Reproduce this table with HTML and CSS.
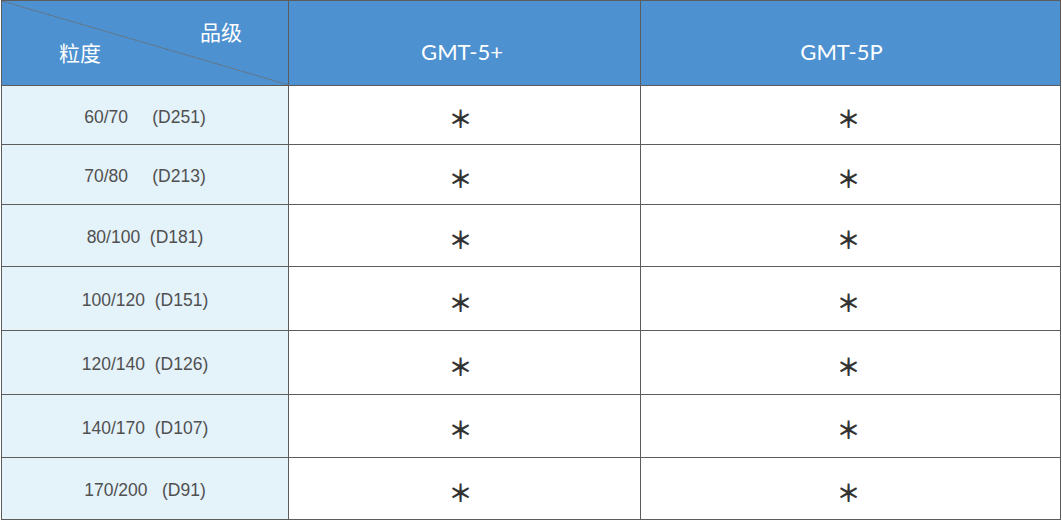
FILE: index.html
```html
<!DOCTYPE html>
<html lang="zh">
<head>
<meta charset="utf-8">
<title>粒度 品级</title>
<link rel="stylesheet" href="styles.css">
</head>
<body>
<div class="grid">
  <div class="cell head corner">
    <svg class="diag" width="287" height="84" viewBox="0 0 287 84" preserveAspectRatio="none">
      <line x1="0" y1="0" x2="287" y2="84" stroke="#6e6a6a" stroke-width="1" stroke-dasharray="2 1"/>
    </svg>
    <span class="lbl-top">品级</span>
    <span class="lbl-bot">粒度</span>
  </div>
  <div class="cell head grade">GMT-5+</div>
  <div class="cell head grade g2">GMT-5P</div>

  <div class="cell size">60/70     (D251)</div>
  <div class="cell mark"><span class="ast">＊</span></div>
  <div class="cell mark m2"><span class="ast">＊</span></div>

  <div class="cell size">70/80     (D213)</div>
  <div class="cell mark"><span class="ast">＊</span></div>
  <div class="cell mark m2"><span class="ast">＊</span></div>

  <div class="cell size">80/100  (D181)</div>
  <div class="cell mark"><span class="ast">＊</span></div>
  <div class="cell mark m2"><span class="ast">＊</span></div>

  <div class="cell size">100/120  (D151)</div>
  <div class="cell mark"><span class="ast">＊</span></div>
  <div class="cell mark m2"><span class="ast">＊</span></div>

  <div class="cell size">120/140  (D126)</div>
  <div class="cell mark"><span class="ast">＊</span></div>
  <div class="cell mark m2"><span class="ast">＊</span></div>

  <div class="cell size">140/170  (D107)</div>
  <div class="cell mark"><span class="ast">＊</span></div>
  <div class="cell mark m2"><span class="ast">＊</span></div>

  <div class="cell size">170/200   (D91)</div>
  <div class="cell mark"><span class="ast">＊</span></div>
  <div class="cell mark m2"><span class="ast">＊</span></div>
</div>
</body>
</html>
```
FILE: styles.css
```css
html, body {
  margin: 0;
  padding: 0;
  background: #ffffff;
}
.grid {
  display: grid;
  grid-template-columns: 287px 352px 420px;
  grid-template-rows: 85px 59px 60px 62px 64px 64px 63px 62px;
  width: 1060px;
  box-sizing: border-box;
  margin-left: 1px;
  border-top: 1px solid #5c5c5c;
  border-left: 1px solid #5c5c5c;
}
.cell {
  box-sizing: border-box;
  border-right: 1px solid #5c5c5c;
  border-bottom: 1px solid #5c5c5c;
  display: flex;
  align-items: center;
  justify-content: center;
}
.head {
  background: #4d91d0;
  color: #ffffff;
}
.corner {
  position: relative;
  display: flex;
  flex-direction: column;
  align-items: stretch;
  justify-content: flex-start;
  font-family: "Noto Sans CJK SC", "Noto Sans", sans-serif;
  font-size: 21px;
  line-height: 24px;
}
.diag {
  position: absolute;
  left: 0;
  top: 0;
}
.lbl-top {
  align-self: flex-end;
  margin-top: 18px;
  margin-right: 46px;
}
.lbl-bot {
  align-self: flex-start;
  margin-top: -3px;
  margin-left: 57px;
}
.grade {
  font-family: Lato, "Open Sans", sans-serif;
  font-weight: 400;
  font-size: 22px;
  padding-top: 16px;
  padding-right: 5px;
}
.grade.g2 {
  padding-right: 18px;
}
.size {
  background: #e4f2fa;
  color: #505050;
  font-family: "Liberation Sans", Arial, sans-serif;
  font-size: 17.5px;
  white-space: pre;
  padding-top: 4px;
}
.mark {
  color: #333333;
  padding-top: 6px;
  padding-right: 8px;
}
.mark.m2 {
  padding-right: 4px;
}
.ast {
  font-family: "Noto Sans CJK SC", sans-serif;
  font-weight: 700;
  font-size: 24px;
  line-height: 24px;
}
```
